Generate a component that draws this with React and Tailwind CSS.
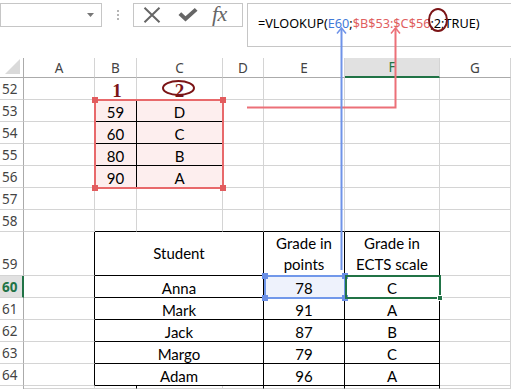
import React from "react";

const COLS = "grid grid-cols-[24px_71px_42px_86px_41px_81px_95px_71px]";
const ROW = `${COLS} grid-rows-[22px] h-[22px]`;
const UI = "font-['Noto_Sans',sans-serif]";
const CELL = "font-['Lato',sans-serif]";

function Cell({ children, r = "border-r-[#d4d4d4]", b = "border-b-[#d4d4d4]", className = "" }) {
  return (
    <div className={`flex items-center justify-center overflow-hidden border-r border-b ${r} ${b} ${className}`}>
      {children}
    </div>
  );
}

function Num({ n, active, tall }) {
  return (
    <div
      className={`flex ${tall ? "items-end pb-[2px]" : "items-center pt-[1px]"} pl-[2px] border-b border-b-[#d4d4d4] text-[13.5px] leading-[18px] ${UI} ${
        active
          ? "bg-[#e1e1e1] text-[#217346] font-bold border-r-2 border-r-[#217346]"
          : "border-r border-r-[#ababab] text-[#444]"
      }`}
    >
      {n}
    </div>
  );
}

function ColHead({ label, active }) {
  return (
    <div
      className={`flex items-center justify-center border-r border-r-[#d4d4d4] text-[13.5px] leading-[18px] ${UI} ${
        active
          ? "bg-[#e1e1e1] text-[#217346] border-b-2 border-b-[#217346]"
          : "text-[#444] border-b border-b-[#ababab]"
      }`}
    >
      {label}
    </div>
  );
}

const LOOKUP = [
  ["53", "59", "D"],
  ["54", "60", "C"],
  ["55", "80", "B"],
  ["56", "90", "A"],
];

const STUDENTS = [
  ["60", "Anna", "78", "C"],
  ["61", "Mark", "91", "A"],
  ["62", "Jack", "87", "B"],
  ["63", "Margo", "79", "C"],
  ["64", "Adam", "96", "A"],
];

function Handles({ color, all = true }) {
  const sq = `absolute w-[6px] h-[6px] ${color}`;
  return (
    <>
      {all && <span className={`${sq} -left-[4px] -top-[4px]`} />}
      {all && <span className={`${sq} -right-[4px] -top-[4px]`} />}
      {all && <span className={`${sq} -left-[4px] -bottom-[4px]`} />}
      <span className={`${sq} -right-[4px] -bottom-[4px]`} />
    </>
  );
}

export default function App() {
  return (
    <div className={`relative w-[511px] h-[389px] overflow-hidden bg-white text-black ${CELL}`}>
      {/* toolbar: name box, buttons, formula bar */}
      <div className="flex items-start h-[58px] pt-[3px]">
        <div className="w-[102px] h-[24px] border border-[#c6c6c6] flex items-center justify-end pr-[7px]">
          <svg width="7" height="4" viewBox="0 0 7 4">
            <path d="M0 0H7L3.5 4Z" fill="#777" />
          </svg>
        </div>
        <div className="w-[31px] h-[24px] flex flex-col items-center justify-center gap-[2px]">
          <span className="w-[2px] h-[2px] bg-[#b5b5b5]" />
          <span className="w-[2px] h-[2px] bg-[#b5b5b5]" />
          <span className="w-[2px] h-[2px] bg-[#b5b5b5]" />
        </div>
        <div className="w-[110px] h-[24px] border border-[#c6c6c6] flex items-center pl-[9px]">
          <svg width="18" height="16" viewBox="0 0 18 16">
            <path d="M1.5 0.8L16.5 15.2M16.5 0.8L1.5 15.2" stroke="#666" strokeWidth="2" />
          </svg>
          <svg width="20" height="14" viewBox="0 0 20 14" className="ml-[17px]">
            <path d="M0.5 7L3.2 4.3L7.5 8.3L16.8 0L19.5 2.8L7.5 13.6Z" fill="#666" />
          </svg>
          <span className="ml-[14px] -mt-[2px] font-['Liberation_Serif',serif] italic text-[22px] leading-none text-[#666] tracking-[-0.5px]">
            fx
          </span>
        </div>
        <div className="ml-[4px] w-[264px] h-[44px] border border-[#c6c6c6] border-r-0 pl-[10px] pt-[6px]">
          <span className={`${UI} text-[12.7px] leading-[18px]`}>
            =VLOOKUP(<span className="text-[#3f7ad8]">E60</span>;
            <span className="text-[#e0605f]">$B$53:$C$56</span>;2;TRUE)
          </span>
        </div>
      </div>

      {/* column headers */}
      <div className={`${COLS} grid-rows-[20px] h-[20px]`}>
        <div className="relative border-r border-r-[#ababab] border-b border-b-[#ababab]">
          <svg width="15" height="15" viewBox="0 0 15 15" className="absolute right-[3px] bottom-[3px]">
            <path d="M15 0V15H0Z" fill="#dadada" />
          </svg>
        </div>
        <ColHead label="A" />
        <ColHead label="B" />
        <ColHead label="C" />
        <ColHead label="D" />
        <ColHead label="E" />
        <ColHead label="F" active />
        <ColHead label="G" />
      </div>

      {/* row 52 */}
      <div className={ROW}>
        <Num n="52" />
        <Cell />
        <Cell b="border-b-black" className="font-['Liberation_Serif',serif] font-bold text-[19px] leading-none text-[#7b1416] pl-[3px] pt-[3px]">
          1
        </Cell>
        <Cell b="border-b-black" className="font-['Liberation_Serif',serif] font-bold text-[19px] leading-none text-[#7b1416] pt-[3px]">
          2
        </Cell>
        <Cell />
        <Cell />
        <Cell />
        <Cell />
      </div>

      {/* lookup range */}
      {LOOKUP.map(([n, pts, grade]) => (
        <div key={n} className={`${ROW} text-[15px] leading-[18px]`}>
          <Num n={n} />
          <Cell r="border-r-black" />
          <Cell r="border-r-black" b="border-b-black" className="bg-[#fdeeee] pt-[2px]">
            {pts}
          </Cell>
          <Cell r="border-r-black" b="border-b-black" className="bg-[#fdeeee] pt-[2px]">
            {grade}
          </Cell>
          <Cell />
          <Cell />
          <Cell />
          <Cell />
        </div>
      ))}

      {/* rows 57, 58 */}
      <div className={ROW}>
        <Num n="57" />
        <Cell />
        <Cell />
        <Cell />
        <Cell />
        <Cell />
        <Cell />
        <Cell />
      </div>
      <div className={ROW}>
        <Num n="58" />
        <Cell />
        <Cell b="border-b-black" />
        <Cell b="border-b-black" />
        <Cell b="border-b-black" />
        <Cell b="border-b-black" />
        <Cell b="border-b-black" />
        <Cell />
      </div>

      {/* table header */}
      <div className={`${COLS} grid-rows-[44px] h-[44px] text-[15px] leading-[21px]`}>
        <Num n="59" tall />
        <Cell r="border-r-black" />
        <Cell r="border-r-black" b="border-b-black" className="col-span-3">
          Student
        </Cell>
        <Cell r="border-r-black" b="border-b-black" className="text-center">
          Grade in
          <br />
          points
        </Cell>
        <Cell r="border-r-black" b="border-b-black" className="text-center">
          Grade in
          <br />
          ECTS scale
        </Cell>
        <Cell />
      </div>

      {/* students */}
      {STUDENTS.map(([n, name, pts, grade]) => (
        <div key={n} className={`${ROW} text-[15px] leading-[18px]`}>
          <Num n={n} active={n === "60"} />
          <Cell r="border-r-black" />
          <Cell r="border-r-black" b="border-b-black" className="col-span-3 pt-[2px]">
            {name}
          </Cell>
          <Cell
            r="border-r-black"
            b="border-b-black"
            className={`pt-[2px] ${n === "60" ? "bg-[#eef2fc]" : ""}`}
          >
            {pts}
          </Cell>
          <Cell r="border-r-black" b="border-b-black" className="pt-[2px]">
            {grade}
          </Cell>
          <Cell />
        </div>
      ))}

      <div className={`${COLS} grid-rows-[3px] h-[3px]`}>
        <div className="border-r border-r-[#ababab]" />
        <Cell />
        <Cell r="border-r-black" />
        <Cell />
        <Cell r="border-r-black" />
        <Cell r="border-r-black" />
        <Cell r="border-r-black" />
        <Cell />
      </div>

      {/* highlighted lookup range */}
      <div className="absolute left-[94px] top-[99px] w-[130px] h-[90px] border-2 border-[#e8696b] pointer-events-none">
        <Handles color="bg-[#e25c5e]" />
      </div>

      {/* highlighted E60 */}
      <div className="absolute left-[264px] top-[275px] w-[82px] h-[24px] border-2 border-[#7198ea] pointer-events-none">
        <Handles color="bg-[#6a8fe6]" />
      </div>

      {/* active cell F60 */}
      <div className="absolute left-[345px] top-[275px] w-[96px] h-[24px] border-2 border-[#217346] pointer-events-none">
        <Handles color="bg-[#217346] border border-white" all={false} />
      </div>

      {/* precedent arrows and circles */}
      <svg className="absolute left-0 top-0 pointer-events-none" width="511" height="389" viewBox="0 0 511 389">
        <path d="M395.5 29V107.5H247" fill="none" stroke="#ec7078" strokeWidth="2" />
        <path d="M391 33.5L395.5 28L400 33.5" fill="none" stroke="#ec7078" strokeWidth="1.5" />
        <path d="M341.5 29V270" fill="none" stroke="#6f93e8" strokeWidth="2" />
        <path d="M337 33.5L341.5 28L346 33.5" fill="none" stroke="#6f93e8" strokeWidth="1.5" />
        <ellipse cx="438" cy="20" rx="9" ry="11" fill="none" stroke="#7b1416" strokeWidth="2" />
        <ellipse cx="178.5" cy="88" rx="15.5" ry="7" fill="none" stroke="#7b1416" strokeWidth="2" />
      </svg>
    </div>
  );
}
